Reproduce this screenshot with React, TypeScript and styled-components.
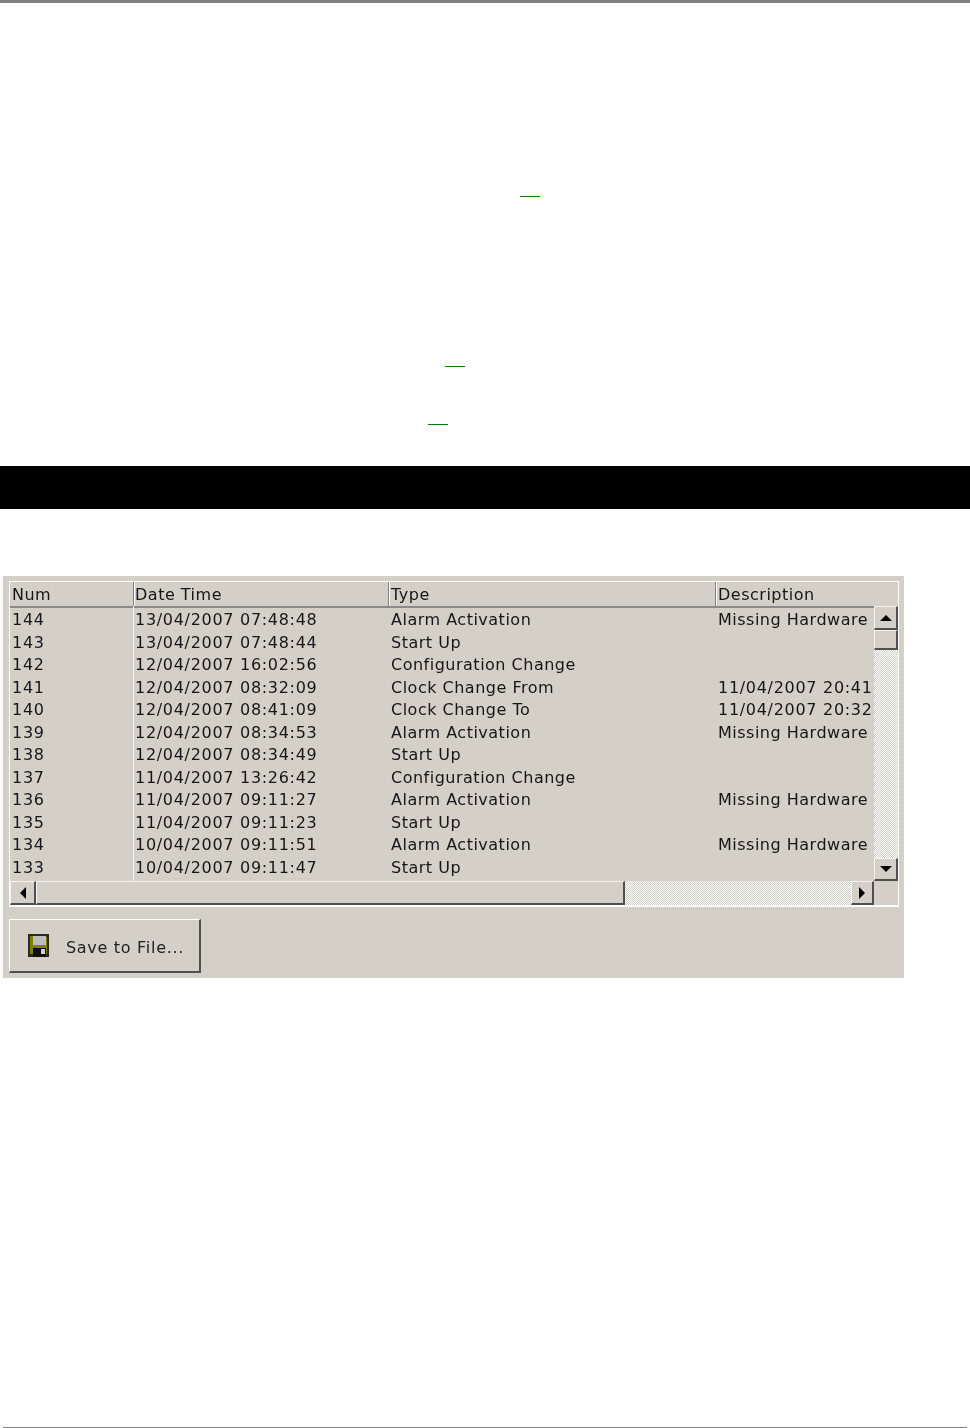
import React from 'react';
import styled, { createGlobalStyle } from 'styled-components';

const GlobalStyle = createGlobalStyle`
    html, body {
        margin: 0;
        padding: 0;
        background: #fff;
    }
    body {
        font-family: 'DejaVu Sans', 'Liberation Sans', sans-serif;
    }
`;

const Page = styled.div`
    width: 970px;
    height: 1428px;
    overflow: hidden;
    display: flex;
    flex-direction: column;
    box-sizing: border-box;
    border-top: 3px solid #808080;
`;

const LinkMark = styled.div<{ $left: number; $top: number }>`
    width: 20px;
    height: 1px;
    background: #0a7a0a;
    margin-left: ${p => p.$left}px;
    margin-top: ${p => p.$top}px;
`;

const BlackBand = styled.div`
    height: 43px;
    background: #000;
    margin-top: 41px;
`;

const Panel = styled.div`
    width: 901px;
    height: 402px;
    margin: 67px 0 0 3px;
    padding: 5px 5px 0 6px;
    box-sizing: border-box;
    background: #d4d0c8;
    color: #161616;
`;

const ListView = styled.div`
    width: 890px;
    height: 326px;
    box-sizing: border-box;
    border: 1px solid #fff;
    border-bottom-width: 2px;
    display: grid;
    grid-template-columns: 864px 24px;
    grid-template-rows: 24px 275px 24px;
    filter: blur(0.3px);
`;

const HeaderRow = styled.div`
    grid-column: 1 / 3;
    display: grid;
    grid-template-columns: 124px 255px 327px 1fr;
`;

const HeaderCell = styled.div<{ $inset: number }>`
    box-sizing: border-box;
    font-size: 16px;
    letter-spacing: 0.5px;
    line-height: 23px;
    padding: 1px 0 0 ${p => p.$inset}px;
    border-right: 1px solid #808080;
    border-bottom: 2px solid #8a8a8a;
    box-shadow: inset 1px 0 0 #fff;
    white-space: nowrap;
    &:first-child {
        box-shadow: none;
    }
    &:last-child {
        border-right: none;
    }
`;

const Body = styled.div`
    overflow: hidden;
    padding-top: 2px;
    box-sizing: border-box;
    background: linear-gradient(#f4f3ef, #f4f3ef) 123px 0 / 1px 100% no-repeat;
`;

const Row = styled.div`
    display: grid;
    grid-template-columns: 124px 255px 327px 158px;
    height: 22.55px;
`;

const Cell = styled.div<{ $numeric?: boolean; $inset: number }>`
    font-size: 16px;
    letter-spacing: ${p => (p.$numeric ? 0.7 : 0.5)}px;
    line-height: 24px;
    padding-left: ${p => p.$inset}px;
    white-space: nowrap;
    overflow: hidden;
    box-sizing: border-box;
`;

const dither = `repeating-conic-gradient(#d4d0c8 0 25%, #fff 0 50%) 0 0 / 2px 2px`;

const VTrack = styled.div`
    display: flex;
    flex-direction: column;
    background: ${dither};
`;

const HTrack = styled.div`
    display: flex;
    background: ${dither};
`;

const ScrollButton = styled.div<{ $w: number; $h: number }>`
    width: ${p => p.$w}px;
    height: ${p => p.$h}px;
    flex: none;
    box-sizing: border-box;
    background: #d4d0c8;
    border-style: solid;
    border-width: 1px 2px 2px 1px;
    border-color: #f4f3ef #505050 #505050 #f4f3ef;
    display: flex;
    align-items: center;
    justify-content: center;
`;

const Spacer = styled.div`
    flex: 1;
`;

const Corner = styled.div`
    background: #d4d0c8;
`;

const SaveButton = styled.div`
    width: 192px;
    height: 54px;
    margin-top: 12px;
    box-sizing: border-box;
    display: flex;
    align-items: center;
    background: #d4d0c8;
    border-style: solid;
    border-width: 1px 2px 2px 1px;
    border-color: #fff #505050 #505050 #fff;
    padding-left: 18px;
    font-size: 16px;
    letter-spacing: 0.7px;
    color: #222;
    filter: blur(0.3px);
`;

const SaveLabel = styled.span`
    margin-left: 17px;
    padding-top: 3px;
`;

const FooterRule = styled.div`
    height: 1px;
    background: #808080;
    margin: auto 3px 0 3px;
`;

const Arrow = ({ dir }: { dir: 'up' | 'down' | 'left' | 'right' }) => {
    const points = {
        up: '0,7 6,1 12,7',
        down: '0,1 6,7 12,1',
        left: '7,0 1,6 7,12',
        right: '1,0 7,6 1,12',
    }[dir];
    const horizontal = dir === 'up' || dir === 'down';
    return (
        <svg width={horizontal ? 12 : 8} height={horizontal ? 8 : 12} viewBox={horizontal ? '0 0 12 8' : '0 0 8 12'}>
            <polygon points={points} fill="#000" />
        </svg>
    );
};

const FloppyIcon = () => (
    <svg width="21" height="23" viewBox="0 0 21 23">
        <rect width="21" height="23" fill="#2a2a20" />
        <rect x="2" y="2" width="3" height="18" fill="#808000" />
        <rect x="5" y="11" width="13" height="3" fill="#808000" />
        <rect x="18" y="3" width="1" height="17" fill="#808000" />
        <rect x="5" y="2" width="13" height="9" fill="#bdbdbd" />
        <rect x="5" y="14" width="13" height="9" fill="#111" />
        <rect x="13" y="15" width="4" height="5" fill="#d4d0c8" />
    </svg>
);

const columns = ['Num', 'Date Time', 'Type', 'Description'];
const insets = [2, 1, 2, 2];

const rows = [
    ['144', '13/04/2007 07:48:48', 'Alarm Activation', 'Missing Hardware'],
    ['143', '13/04/2007 07:48:44', 'Start Up', ''],
    ['142', '12/04/2007 16:02:56', 'Configuration Change', ''],
    ['141', '12/04/2007 08:32:09', 'Clock Change From', '11/04/2007 20:41'],
    ['140', '12/04/2007 08:41:09', 'Clock Change To', '11/04/2007 20:32'],
    ['139', '12/04/2007 08:34:53', 'Alarm Activation', 'Missing Hardware'],
    ['138', '12/04/2007 08:34:49', 'Start Up', ''],
    ['137', '11/04/2007 13:26:42', 'Configuration Change', ''],
    ['136', '11/04/2007 09:11:27', 'Alarm Activation', 'Missing Hardware'],
    ['135', '11/04/2007 09:11:23', 'Start Up', ''],
    ['134', '10/04/2007 09:11:51', 'Alarm Activation', 'Missing Hardware'],
    ['133', '10/04/2007 09:11:47', 'Start Up', ''],
];

const App = () => (
    <Page>
        <GlobalStyle />
        <LinkMark $left={520} $top={193} />
        <LinkMark $left={445} $top={169} />
        <LinkMark $left={428} $top={57} />
        <BlackBand />
        <Panel>
            <ListView>
                <HeaderRow>
                    {columns.map((c, i) => (
                        <HeaderCell key={c} $inset={insets[i]}>
                            {c}
                        </HeaderCell>
                    ))}
                </HeaderRow>
                <Body>
                    {rows.map(r => (
                        <Row key={r[0]}>
                            {r.map((v, i) => (
                                <Cell key={i} $inset={insets[i]} $numeric={i < 2 || /^\d/.test(v)}>
                                    {v}
                                </Cell>
                            ))}
                        </Row>
                    ))}
                </Body>
                <VTrack>
                    <ScrollButton $w={24} $h={24}>
                        <Arrow dir="up" />
                    </ScrollButton>
                    <ScrollButton $w={24} $h={20} />
                    <Spacer />
                    <ScrollButton $w={24} $h={23}>
                        <Arrow dir="down" />
                    </ScrollButton>
                </VTrack>
                <HTrack>
                    <ScrollButton $w={26} $h={24}>
                        <Arrow dir="left" />
                    </ScrollButton>
                    <ScrollButton $w={589} $h={24} />
                    <Spacer />
                    <ScrollButton $w={23} $h={24}>
                        <Arrow dir="right" />
                    </ScrollButton>
                </HTrack>
                <Corner />
            </ListView>
            <SaveButton>
                <FloppyIcon />
                <SaveLabel>Save to File...</SaveLabel>
            </SaveButton>
        </Panel>
        <FooterRule />
    </Page>
);

export default App;
